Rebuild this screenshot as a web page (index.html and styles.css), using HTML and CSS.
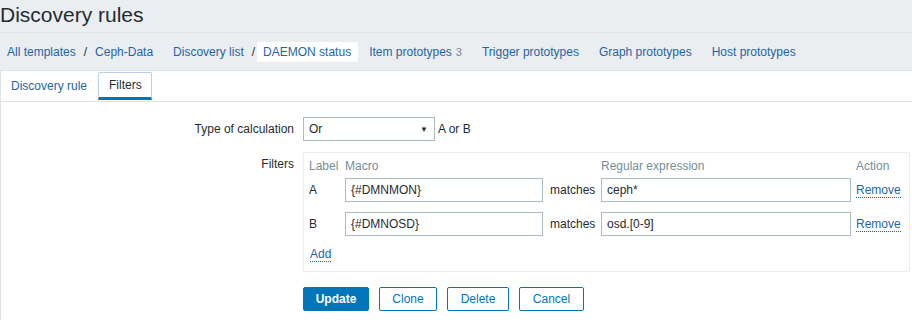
FILE: index.html
```html
<!DOCTYPE html>
<html>
<head>
    <title>Discovery rules</title>
    <link rel="stylesheet" href="styles.css">
</head>
<body>
    <!-- Cabecera -->
    <header class="page-header">
        <h1>Discovery rules</h1>
    </header>

    <!-- Navegación -->
    <nav class="object-nav">
        <div class="nav-group">
            <a href="#">All templates</a>
            <span class="sep">/</span>
            <a href="#">Ceph-Data</a>
        </div>
        <div class="nav-group">
            <a href="#">Discovery list</a>
            <span class="sep">/</span>
            <span class="current">DAEMON status</span>
        </div>
        <div class="nav-group">
            <a href="#">Item prototypes</a><sup class="count">3</sup>
        </div>
        <div class="nav-group"><a href="#">Trigger prototypes</a></div>
        <div class="nav-group"><a href="#">Graph prototypes</a></div>
        <div class="nav-group"><a href="#">Host prototypes</a></div>
    </nav>

    <main class="content">
        <!-- Pestañas -->
        <ul class="tabs">
            <li><a href="#">Discovery rule</a></li>
            <li class="active"><span>Filters</span></li>
        </ul>

        <form class="rule-form">
            <div class="form-row">
                <label class="form-label">Type of calculation</label>
                <div class="form-field inline">
                    <div class="select">
                        <span>Or</span>
                        <span class="arrow">&#9660;</span>
                    </div>
                    <span class="formula">A or B</span>
                </div>
            </div>

            <div class="form-row">
                <label class="form-label">Filters</label>
                <div class="form-field">
                    <div class="filter-box">
                        <div class="filter-grid">
                            <span class="col-head">Label</span>
                            <span class="col-head">Macro</span>
                            <span class="col-head"></span>
                            <span class="col-head">Regular expression</span>
                            <span class="col-head action">Action</span>

                            <span class="cell">A</span>
                            <input class="text-input" type="text" value="{#DMNMON}">
                            <span class="cell op">matches</span>
                            <input class="text-input" type="text" value="ceph*">
                            <span class="cell action"><a href="#" class="link-action">Remove</a></span>

                            <span class="cell">B</span>
                            <input class="text-input" type="text" value="{#DMNOSD}">
                            <span class="cell op">matches</span>
                            <input class="text-input" type="text" value="osd.[0-9]">
                            <span class="cell action"><a href="#" class="link-action">Remove</a></span>
                        </div>
                        <a href="#" class="link-action add">Add</a>
                    </div>
                </div>
            </div>

            <div class="form-row">
                <span class="form-label"></span>
                <div class="form-field buttons">
                    <button type="button" class="btn btn-primary">Update</button>
                    <button type="button" class="btn btn-alt btn-clone">Clone</button>
                    <button type="button" class="btn btn-alt btn-delete">Delete</button>
                    <button type="button" class="btn btn-alt btn-cancel">Cancel</button>
                </div>
            </div>
        </form>
    </main>
</body>
</html>
```

FILE: styles.css
```css
/* Estilos generales */
:root {
    --fondo: #ebeef0;
    --borde: #dfe4e7;
    --texto: #1f2c33;
    --enlace: #1f65a6;
    --gris: #768d99;
    --azul: #0275b8;
    --borde-input: #acbbc2;
}

* {
    margin: 0;
    padding: 0;
    box-sizing: border-box;
}

body {
    font-family: 'Liberation Sans', Arial, sans-serif;
    font-size: 12px;
    color: var(--texto);
    background: #ffffff;
}

a {
    color: var(--enlace);
    text-decoration: none;
}

/* Cabecera */
.page-header {
    background: var(--fondo);
    height: 33px;
    border-bottom: 1px solid var(--borde);
}

.page-header h1 {
    font-size: 21px;
    font-weight: normal;
    line-height: 30px;
    color: #1f2c33;
}

/* Navegación */
.object-nav {
    background: var(--fondo);
    height: 38px;
    border-bottom: 1px solid var(--borde);
    display: flex;
    align-items: center;
    padding-left: 7px;
    gap: 20px;
}

.nav-group {
    display: flex;
    align-items: center;
}

.sep {
    color: var(--texto);
    margin: 0 8px;
}

.current {
    background: #ffffff;
    color: var(--enlace);
    padding: 3px 7px 3px 6px;
    line-height: 14px;
    margin-left: -6px;
    margin-right: -9px;
}

.count {
    color: var(--gris);
    font-size: 11px;
    margin-left: 4px;
    vertical-align: baseline;
}

/* Pestañas */
.content {
    border-left: 1px solid var(--borde);
    min-height: 250px;
}

.tabs {
    list-style: none;
    display: flex;
    align-items: stretch;
    height: 31px;
    border-bottom: 1px solid var(--borde);
    padding-left: 4px;
}

.tabs li {
    display: flex;
    align-items: center;
    padding: 0 6px;
    margin-right: 5px;
}

.tabs li.active {
    border: 1px solid #b6cfec;
    border-bottom: 3px solid var(--azul);
    border-radius: 2px 2px 0 0;
    padding: 0 10px;
    margin-top: 1px;
    margin-bottom: 1px;
    width: 54px;
    color: var(--texto);
}

/* Formulario */
.rule-form {
    padding-top: 15px;
}

.form-row {
    display: flex;
    align-items: flex-start;
    margin-bottom: 11px;
}

.form-label {
    width: 302px;
    flex-shrink: 0;
    text-align: right;
    padding-right: 9px;
    line-height: 24px;
}

.form-field.inline {
    display: flex;
    align-items: center;
}

.select {
    width: 132px;
    height: 24px;
    border: 1px solid var(--borde-input);
    display: flex;
    align-items: center;
    justify-content: space-between;
    padding: 0 6px 0 5px;
}

.select .arrow {
    font-size: 8px;
}

.formula {
    margin-left: 3px;
}

/* Caja de filtros */
.filter-box {
    width: 607px;
    border: 1px solid var(--fondo);
    padding: 4px 5px 9px 5px;
}

.filter-grid {
    display: grid;
    grid-template-columns: 36px 198px 58px 250px 1fr;
    grid-template-rows: 21px 24px 34px;
    align-items: end;
}

.filter-grid .col-head {
    color: var(--gris);
    align-self: start;
    line-height: 14px;
    padding-top: 2px;
}

.cell {
    height: 24px;
    display: flex;
    align-items: center;
}

.action {
    padding-left: 5px;
}

.cell.op {
    padding-left: 7px;
}

.text-input {
    height: 24px;
    width: 100%;
    border: 1px solid var(--borde-input);
    padding: 0 5px;
    font-family: inherit;
    font-size: 12px;
    color: var(--texto);
    outline: none;
}

.link-action {
    border-bottom: 1px dotted var(--enlace);
    line-height: 14px;
}

.link-action.add {
    display: inline-block;
    margin: 11px 0 0 1px;
}

/* Botones */
.buttons {
    display: flex;
    gap: 10px;
    padding-top: 4px;
}

.btn {
    height: 24px;
    padding: 0;
    font-family: inherit;
    font-size: 12px;
    border-radius: 2px;
    cursor: pointer;
}

.btn-primary {
    background: var(--azul);
    border: 1px solid var(--azul);
    color: #ffffff;
    font-weight: bold;
    width: 66px;
}

.btn-alt {
    background: #ffffff;
    border: 1px solid var(--azul);
    color: var(--azul);
}

.btn-clone {
    width: 58px;
}

.btn-delete {
    width: 62px;
}

.btn-cancel {
    width: 65px;
}
```
